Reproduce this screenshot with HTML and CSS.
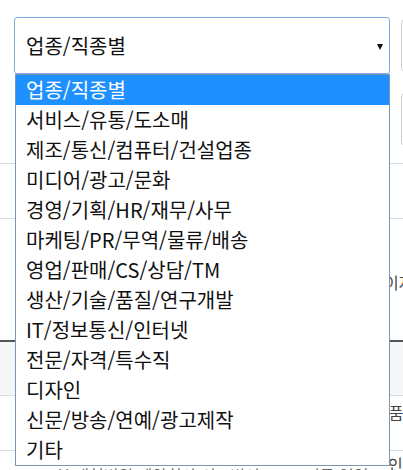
FILE: index.html
```html
<!DOCTYPE html>
<html lang="ko">
<head>
<meta charset="utf-8">
<link rel="stylesheet" href="styles.css">
</head>
<body>
<div class="page">
  <div class="filters">
    <div class="select">
      <span class="select-value">업종/직종별</span>
      <span class="arrow"></span>
    </div>
    <div class="side">
      <div class="side-box"></div>
      <div class="side-box"></div>
    </div>
  </div>

  <div class="table">
    <div class="row row-a"></div>
    <div class="row row-b"><span></span><span class="cell-r">이자</span></div>
    <div class="row row-head"></div>
    <div class="row row-c"><span></span><span class="cell-r">상품</span></div>
    <div class="row row-d">
      <span class="cell-l">천 대형병원 제약회사 의료법인</span>
      <span class="cell-m">정규 영업</span>
      <span class="cell-r2">인기</span>
    </div>
  </div>

  <ul class="dropdown">
    <li class="opt active">업종/직종별</li>
    <li class="opt">서비스/유통/도소매</li>
    <li class="opt">제조/통신/컴퓨터/건설업종</li>
    <li class="opt">미디어/광고/문화</li>
    <li class="opt">경영/기획/HR/재무/사무</li>
    <li class="opt">마케팅/PR/무역/물류/배송</li>
    <li class="opt">영업/판매/CS/상담/TM</li>
    <li class="opt">생산/기술/품질/연구개발</li>
    <li class="opt">IT/정보통신/인터넷</li>
    <li class="opt">전문/자격/특수직</li>
    <li class="opt">디자인</li>
    <li class="opt">신문/방송/연예/광고제작</li>
    <li class="opt">기타</li>
  </ul>
</div>
</body>
</html>
```

FILE: styles.css
```css
* { box-sizing: border-box; }

html, body {
  margin: 0;
  padding: 0;
  background: #ffffff;
  overflow: hidden;
}

body {
  font-family: "Noto Sans CJK KR", "Noto Sans", sans-serif;
  color: #111;
}

.page {
  position: relative;
  width: 403px;
  height: 470px;
  overflow: hidden;
}

.filters {
  display: flex;
  gap: 11px;
  padding: 17px 0 0 14px;
  height: 163px;
}

.select {
  flex: 0 0 376px;
  height: 57px;
  border: 1px solid #80a8de;
  border-radius: 3px;
  background: #fff;
  display: flex;
  align-items: center;
  justify-content: space-between;
  padding: 0 6px 0 11px;
}

.select-value {
  font-size: 20px;
  line-height: 24px;
  color: #111;
  padding-top: 1px;
}

.arrow {
  width: 0;
  height: 0;
  border-left: 3px solid transparent;
  border-right: 3px solid transparent;
  border-top: 6px solid #111;
  margin-top: 2px;
}

.side {
  flex: 0 0 120px;
  display: flex;
  flex-direction: column;
  gap: 21px;
  padding-top: 2px;
}

.side-box {
  height: 53px;
  border: 1px solid #d0d0d0;
  border-radius: 4px;
}

.table {
  font-size: 16px;
  color: #555;
}

.row {
  display: grid;
  grid-template-columns: 388px 1fr;
  border-top: 1px solid #dcdcdc;
}

.row-a { height: 55px; }

.row-b {
  height: 122px;
  padding-top: 52px;
  grid-template-columns: 384px 1fr;
}

.row-head {
  height: 55px;
  border-top: 2px solid #555;
  background: #f6f6f6;
}

.row-c {
  height: 55px;
  padding-top: 5px;
  grid-template-columns: 374px 1fr;
}

.row-d {
  grid-template-columns: 55px 250px 73px 1fr;
  height: 40px;
}

.cell-r, .cell-r2 {
  white-space: nowrap;
  color: #444;
  line-height: 22px;
}

.cell-l,
.cell-m {
  white-space: nowrap;
  overflow: hidden;
  line-height: 22px;
  padding-top: 13px;
  color: #666;
}

.cell-l { grid-column: 2; }
.cell-m { grid-column: 3; }

.cell-r2 {
  grid-column: 4;
  padding-top: 2px;
  margin-left: 10px;
}

.dropdown {
  position: absolute;
  left: 15px;
  top: 74px;
  width: 375px;
  margin: 0;
  padding: 0;
  list-style: none;
  background: #fff;
  border: 1px solid #7b97b8;
}

.opt {
  height: 30px;
  line-height: 30px;
  padding-left: 10px;
  font-size: 20px;
  color: #111;
  white-space: nowrap;
}

.opt.active {
  background: #1e90ff;
  color: #fff;
}
```
